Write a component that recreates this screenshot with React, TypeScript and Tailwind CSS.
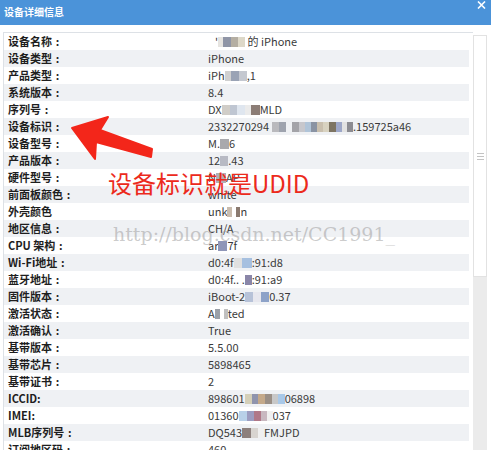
import React from 'react';

type Seg = string | { m: string[] };

const rows: [string, Seg[]][] = [
  ['设备名称：', [{ m: ['w-[7px] bg-transparent'] }, "'", { m: ['w-[5px] bg-[#e6e4e0]', 'w-[8px] bg-[#8f95a6]', 'w-[7px] bg-[#b4aea2]', 'w-[7px] bg-[#ddd8c8]'] }, ' 的 iPhone']],
  ['设备类型：', ['iPhone']],
  ['产品类型：', ['iPh', { m: ['w-[6px] bg-[#d0d0d0]', 'w-[8px] bg-[#9aa3b5]', 'w-[8px] bg-[#c4c8d0]'] }, ',1']],
  ['系统版本：', ['8.4']],
  ['序列号：', ['DX', { m: ['w-[8px] bg-[#d0cdc8]', 'w-[7px] bg-[#bfc6d2]', 'w-[8px] bg-[#dfe6ef]', 'w-[6px] bg-[#ebebeb]', 'w-[9px] bg-[#8c7d76]'] }, 'MLD']],
  ['设备标识：', ['2332270294', { m: ['w-[3px] bg-transparent', 'w-[7px] bg-[#b9b9bd]', 'w-[7px] bg-[#9ea3ae]', 'w-[6px] bg-transparent', 'w-[7px] bg-[#a3a3a8]', 'w-[6px] bg-[#c7c7cc]', 'w-[6px] bg-[#b0c4d8]', 'w-[6px] bg-[#8a93a3]', 'w-[6px] bg-[#c9bfae]', 'w-[6px] bg-[#d8d2c0]', 'w-[7px] bg-[#7d7462]', 'w-[6px] bg-[#9da7c8]', 'w-[5px] bg-[#e2e2e2]', 'w-[6px] bg-[#8c8c92]'] }, '.159725a46']],
  ['设备型号：', ['M.', { m: ['w-[9px] bg-[#a9a9ad]'] }, '6']],
  ['产品版本：', ['12', { m: ['w-[8px] bg-[#b8bac4]'] }, '.43']],
  ['硬件型号：', ['N', { m: ['w-[10px] bg-[#b0b0b5]'] }, 'AP']],
  ['前面板颜色：', ['white']],
  ['外壳颜色', ['unk', { m: ['w-[5px] bg-[#c9bcae]', 'w-[4px] bg-transparent', 'w-[4px] bg-[#8a7a70]'] }, 'n']],
  ['地区信息：', ['CH/A']],
  ['CPU 架构：', ['ar', { m: ['w-[9px] bg-[#8f96b8]'] }, '7f']],
  ['Wi-Fi地址：', ['d0:4f', { m: ['w-[8px] bg-[#e0e0e0]', 'w-[10px] bg-[#a6c0e0]'] }, ':91:d8']],
  ['蓝牙地址：', ['d0:4f.. .', { m: ['w-[7px] bg-[#8a86a8]'] }, ':91:a9']],
  ['固件版本：', ['iBoot-2', { m: ['w-[8px] bg-[#b7c2d8]', 'w-[8px] bg-[#e7e7ee]', 'w-[8px] bg-[#8da2c8]'] }, '0.37']],
  ['激活状态：', ['A', { m: ['w-[5px] bg-[#9aa0a8]', 'w-[4px] bg-transparent', 'w-[4px] bg-[#c0c0c0]'] }, 'ted']],
  ['激活确认：', ['True']],
  ['基带版本：', ['5.5.00']],
  ['基带芯片：', ['5898465']],
  ['基带证书：', ['2']],
  ['ICCID:', ['898601', { m: ['w-[7px] bg-[#d4cfb8]', 'w-[6px] bg-[#8f94ad]', 'w-[7px] bg-[#c4a98a]', 'w-[7px] bg-[#9a8f86]', 'w-[6px] bg-[#c8c8c8]', 'w-[7px] bg-[#a8c8e8]'] }, '06898']],
  ['IMEI:', ['01360', { m: ['w-[8px] bg-[#b8d0e8]', 'w-[7px] bg-[#9c9cc0]', 'w-[7px] bg-[#b07888]', 'w-[6px] bg-[#c8b8c0]', 'w-[6px] bg-[#f0f0f0]'] }, '037']],
  ['MLB序列号：', ['DQ543', { m: ['w-[9px] bg-[#8c7f7c]', 'w-[7px] bg-[#d8d4d0]', 'w-[6px] bg-[#f0f0f0]'] }, 'FMJPD']],
  ['订阅地区码：', ['460']],
];

const Value = ({ segs }: { segs: Seg[] }) => (
  <span className="flex items-center whitespace-pre">
    {segs.map((s, i) =>
      typeof s === 'string' ? (
        <span key={i}>{s}</span>
      ) : (
        <span key={i} className="flex h-[10px] blur-[0.4px]">
          {s.m.map((c, j) => (
            <span key={j} className={`h-full ${c}`}></span>
          ))}
        </span>
      )
    )}
  </span>
);

// full-width colon is drawn centred, as in the original font
const Label = ({ text }: { text: string }) =>
  text.endsWith('：') ? (
    <span className="flex items-center">
      {text.slice(0, -1)}
      <span className="w-[11px] text-center">:</span>
    </span>
  ) : (
    <span>{text}</span>
  );

export default function App() {
  return (
    <div className="relative w-[491px] h-[450px] overflow-hidden bg-white font-['Noto_Sans_CJK_SC',sans-serif]">
      {/* title bar */}
      <div className="h-[25px] bg-[#4b93d9] flex justify-between">
        <span className="pl-[4px] pt-[6px] text-[10px] leading-[11px] font-bold text-white">设备详细信息</span>
        <svg className="mt-[1px] mr-[5px]" width="9" height="8" viewBox="0 0 9 8">
          <path d="M1 0.5 L8 7.5 M8 0.5 L1 7.5" stroke="#fff" strokeWidth="1.6" />
        </svg>
      </div>

      {/* body */}
      <div className="flex pl-[3px] pr-[4px] pt-[7px]">
        <div className="flex-1 border-t border-l border-[#dde1e6] pr-[4px]">
          {rows.map(([label, segs], i) => (
            <div
              key={label}
              className={`h-[17px] flex items-center pl-[4px] ${i % 2 === 1 ? 'bg-[#eff1f4]' : ''}`}
            >
              <span className="w-[200px] shrink-0 text-[11px] font-bold text-[#1e1e1e] leading-none">
                <Label text={label} />
              </span>
              <span className="text-[11px] text-[#3a3a3a] leading-none">
                <Value segs={segs} />
              </span>
            </div>
          ))}
        </div>

        {/* scrollbar */}
        <div className="w-[14px] flex flex-col pt-[3px]">
          <div className="h-[242px] bg-white border border-[#e2e2e2] flex flex-col items-center justify-center gap-[2px]">
            <span className="w-[7px] h-px bg-[#c3c3c3]"></span>
            <span className="w-[7px] h-px bg-[#c3c3c3]"></span>
            <span className="w-[7px] h-px bg-[#c3c3c3]"></span>
          </div>
          <div className="h-[200px] bg-[#ebebeb]"></div>
        </div>
      </div>

      {/* annotations */}
      <svg className="absolute left-0 top-0 pointer-events-none" width="491" height="450">
        <polygon
          points="72,128 108,117 100,130 152,149 151,157 96,142 95,159"
          fill="#f3261a"
          stroke="#f3261a"
          strokeWidth="2"
          strokeLinejoin="round"
        />
      </svg>
      <div className="absolute left-[108px] top-[171px] text-[24px] leading-none text-[#ec2a1c] whitespace-nowrap">
        设备标识就是UDID
      </div>
      <div className="absolute left-[113px] top-[225px] text-[19px] leading-none text-[rgba(160,160,160,0.55)] font-['DejaVu_Serif',serif] whitespace-nowrap pointer-events-none">
        http://blog.csdn.net/CC1991_
      </div>
    </div>
  );
}
